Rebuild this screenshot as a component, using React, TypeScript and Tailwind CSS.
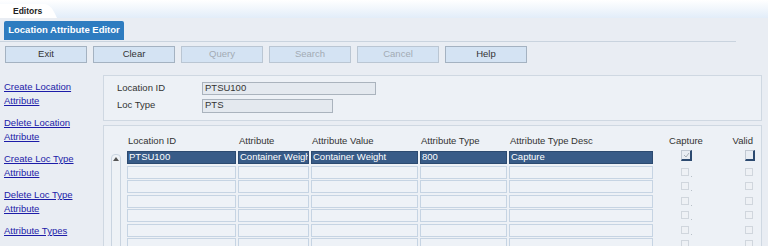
import React from "react";

const font = { fontFamily: '"Liberation Sans", Arial, sans-serif' };

const buttons: { label: string; disabled?: boolean }[] = [
  { label: "Exit" },
  { label: "Clear" },
  { label: "Query", disabled: true },
  { label: "Search", disabled: true },
  { label: "Cancel", disabled: true },
  { label: "Help" },
];

const links: [string, string][] = [
  ["Create Location", "Attribute"],
  ["Delete Location", "Attribute"],
  ["Create Loc Type", "Attribute"],
  ["Delete Loc Type", "Attribute"],
];

const cols = [
  { w: "w-[109px]", label: "Location ID", v: "PTSU100" },
  { w: "w-[71px]", label: "Attribute", v: "Container Weight" },
  { w: "w-[107px]", label: "Attribute Value", v: "Container Weight" },
  { w: "w-[87px]", label: "Attribute Type", v: "800" },
  { w: "w-[144px]", label: "Attribute Type Desc", v: "Capture" },
];

function Row({ selected }: { selected: boolean }) {
  return (
    <div className="flex h-[14.5px] items-start">
      <div className="flex gap-[2px]">
        {cols.map((c, i) => (
          <div
            key={i}
            className={
              c.w +
              " flex h-[13px] items-center overflow-hidden whitespace-nowrap border px-[1px] text-[9.5px] " +
              (selected
                ? "border-[#2c4a70] bg-[#385b87] text-white"
                : "border-[#c6d4e3] bg-[#eef2f7]")
            }
          >
            {selected ? c.v : ""}
          </div>
        ))}
      </div>
      <div className="ml-[28px] w-[64px]">
        {selected ? (
          <div className="relative mt-[-1px] h-[11px] w-[11px] border border-[#c0c8d2] border-b-2 border-r-2 border-b-[#2c4a70] border-r-[#2c4a70] bg-[#e8edf3]">
            <svg className="absolute left-[1px] top-[1px]" width="7" height="6" viewBox="0 0 7 6">
              <path d="M1 3 L3 5 L6 1" stroke="#a8b0b8" strokeWidth="1" fill="none" />
            </svg>
          </div>
        ) : (
          <div className="relative mt-[2px] h-[8px] w-[8px] border border-[#d0d6dd] bg-[#eef1f5]">
            <div className="absolute bottom-[-2px] right-[-4px] h-[1px] w-[1px] bg-[#b8c0c8]" />
          </div>
        )}
      </div>
      <div className="w-[12px]">
        {selected ? (
          <div className="mt-[-1px] h-[11px] w-[10px] border border-[#c0c8d2] border-b-2 border-r-2 border-b-[#2c4a70] border-r-[#2c4a70] bg-[#e8edf3]" />
        ) : (
          <div className="mt-[2px] h-[8px] w-[8px] border border-[#d0d6dd] bg-[#eef1f5]" />
        )}
      </div>
    </div>
  );
}

export default function App() {
  return (
    <div
      className="relative h-[246px] w-[768px] overflow-hidden bg-[#e9edf3] text-[#333]"
      style={font}
    >
      {/* top strip */}
      <div className="relative h-[18px] bg-gradient-to-b from-white to-[#e2edf9]">
        <div className="absolute left-0 top-[4px] flex h-[14px] items-center">
          <div className="flex h-[14px] items-center bg-white pl-[13px] pr-[3px] text-[8.5px] font-bold text-[#222]">
            Editors
          </div>
          <svg width="12" height="14" viewBox="0 0 12 14">
            <path d="M0 0 Q6 0 12 14 L0 14 Z" fill="#ffffff" />
          </svg>
        </div>
      </div>
      {/* header */}
      <div className="pl-[4px] pt-[3px]">
        <div className="flex h-[19px] w-[120px] items-center justify-center whitespace-nowrap rounded-t-[2px] bg-[#2e7cc0] text-[9.5px] font-bold text-white">
          Location Attribute Editor
        </div>
      </div>
      <div className="mt-[1px] h-px w-[736px] bg-[#c9d3de]" />
      {/* buttons */}
      <div className="mt-[4px] flex gap-[6px] pl-[5px]">
        {buttons.map((b) => (
          <div
            key={b.label}
            className={
              "flex h-[17px] w-[82px] items-center justify-center border bg-[#d4e3f3] text-[9.5px] " +
              (b.disabled
                ? "border-[#bac6d3] text-[#a3abb4]"
                : "border-[#a4b2c1] text-[#333]")
            }
          >
            {b.label}
          </div>
        ))}
      </div>
      {/* main */}
      <div className="mt-[12px] flex">
        <div className="flex w-[103px] flex-col gap-[9px] pl-[4px] pt-[5px]">
          {links.map(([a, b]) => (
            <div
              key={a}
              className="flex flex-col text-[9.5px] text-[#1c1ca8] underline"
            >
              <div className="h-[13.5px] leading-[13.5px]">{a}</div>
              <div className="h-[13.5px] leading-[13.5px]">{b}</div>
            </div>
          ))}
          <div className="h-[13.5px] text-[9.5px] leading-[13.5px] text-[#1c1ca8] underline">
            Attribute Types
          </div>
        </div>
        <div className="flex w-[659px] flex-col gap-[4px]">
          {/* form */}
          <div className="flex h-[46px] flex-col gap-[4px] border border-[#cfd8e2] bg-[#edf1f6] pl-[13px] pt-[6px]">
            <div className="flex h-[13px] items-center">
              <div className="w-[85px] text-[9.5px]">Location ID</div>
              <div className="flex h-[13px] w-[174px] items-center border border-[#aab3bd] bg-[#e4e9ef] pl-[2px] text-[9.5px]">
                PTSU100
              </div>
            </div>
            <div className="flex h-[13px] items-center">
              <div className="w-[85px] text-[9.5px]">Loc Type</div>
              <div className="flex h-[14px] w-[131px] items-center border border-[#aab3bd] bg-[#e4e9ef] pl-[2px] text-[9.5px]">
                PTS
              </div>
            </div>
          </div>
          {/* table */}
          <div className="flex h-[130px] border border-[#cfd8e2] bg-[#edf1f6]">
            <div className="ml-[7px] mt-[28px] flex h-[100px] w-[10px] justify-center rounded-t-[4px] border border-[#c9d4e0] bg-[#eef2f6] pt-[2px]">
              <svg width="6" height="4" viewBox="0 0 6 4">
                <path d="M0 4 L3 0 L6 4 Z" fill="#555" />
              </svg>
            </div>
            <div className="ml-[6px] flex flex-col">
              <div className="flex h-[25px] items-end pb-[3px] text-[9.5px]">
                <div className="flex gap-[2px]">
                  {cols.map((c) => (
                    <div key={c.label} className={c.w + " pl-[1px]"}>
                      {c.label}
                    </div>
                  ))}
                </div>
                <div className="ml-[13px] w-[40px] text-center">Capture</div>
                <div className="ml-[17px] w-[30px] text-right">Valid</div>
              </div>
              {[0, 1, 2, 3, 4, 5, 6].map((i) => (
                <Row key={i} selected={i === 0} />
              ))}
            </div>
          </div>
        </div>
      </div>
    </div>
  );
}
